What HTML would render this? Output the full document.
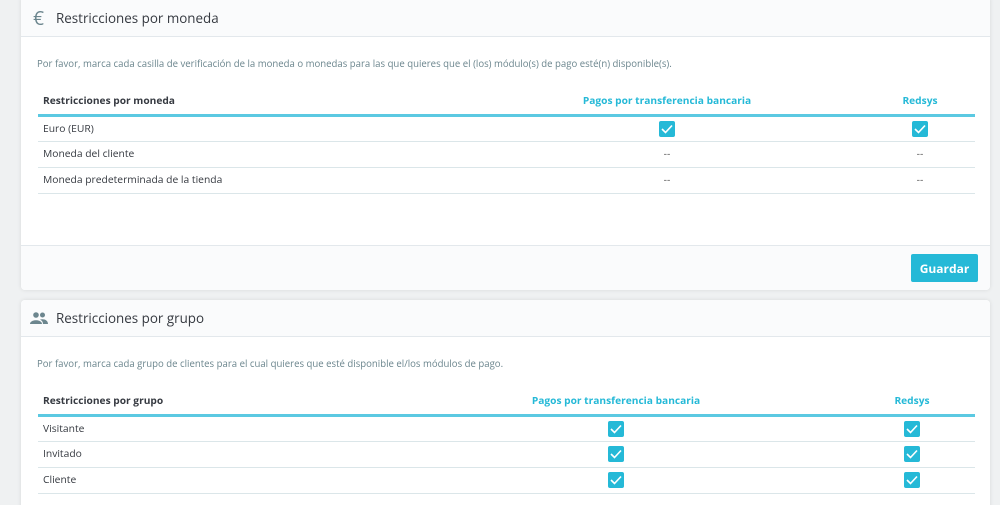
<!DOCTYPE html>
<html><head><meta charset="utf-8"><style>
*{box-sizing:border-box;margin:0;padding:0}
html{width:1000px;height:505px;overflow:hidden}
body{width:1000px;height:505px;overflow:hidden;background:#eff1f2;font-family:"Open Sans","Liberation Sans",sans-serif;color:#363a41;position:relative}
.card{position:absolute;left:21px;width:969px;background:#fff;border-radius:4px;box-shadow:0 0 4px rgba(0,0,0,.1);overflow:hidden}
.hd{height:37px;background:#fafbfc;border-bottom:1px solid #e3e8ec;display:flex;align-items:center;font-size:13.4px;color:#363a41}
.hd .ic{width:35px;display:flex;justify-content:center;color:#6c868e}
.desc{position:absolute;left:16px;font-size:9.6px;color:#6c868e}
table{position:absolute;left:17px;width:937px;border-collapse:collapse;font-size:10.3px;table-layout:fixed}
th{font-weight:bold;text-align:left;height:33px;padding:4px 5px 0;border-bottom:3px solid #5bc9e2;font-size:10.2px}
th.c{text-align:center;color:#25b9d7}
td{height:26px;border-bottom:1px solid #dbe6e9;padding:0 5px;color:#363a41}
td.c{text-align:center;color:#555}
.cb{display:inline-block;width:16px;height:16px;background:#25b9d7;border-radius:2px;vertical-align:middle;position:relative}
.cb svg{position:absolute;left:2px;top:3px}
.ft{position:absolute;left:0;right:0;bottom:0;height:45px;background:#fafbfc;border-top:1px solid #e3e8ec}
.btn{position:absolute;right:12px;top:8px;width:67px;height:28px;background:#25b9d7;color:#fff;font-weight:bold;font-size:12px;display:flex;align-items:center;justify-content:center;border-radius:2px}
</style></head><body>
<div class="card" style="top:-4px;height:294px">
<div class="hd" style="height:41px;padding-top:4px"><span class="ic" style="font-size:19px">€</span>Restricciones por moneda</div>
<div class="desc" style="top:61px">Por favor, marca cada casilla de verificación de la moneda o monedas para las que quieres que el (los) módulo(s) de pago esté(n) disponible(s).</div>
<table style="top:86px">
<tr><th style="width:431px">Restricciones por moneda</th><th class="c" style="width:396px">Pagos por transferencia bancaria</th><th class="c" style="width:110px">Redsys</th></tr>
<tr><td>Euro (EUR)</td><td class="c"><span class="cb"><svg width="12" height="10"><path d="M1 5 L4.5 8.5 L11 1.5" stroke="#fff" stroke-width="1.6" fill="none"/></svg></span></td><td class="c"><span class="cb"><svg width="12" height="10"><path d="M1 5 L4.5 8.5 L11 1.5" stroke="#fff" stroke-width="1.6" fill="none"/></svg></span></td></tr>
<tr><td>Moneda del cliente</td><td class="c">--</td><td class="c">--</td></tr>
<tr><td>Moneda predeterminada de la tienda</td><td class="c">--</td><td class="c">--</td></tr>
</table>
<div class="ft"><div class="btn">Guardar</div></div>
</div>
<div class="card" style="top:300px;height:220px">
<div class="hd"><span class="ic"><svg width="18" height="12" viewBox="0 0 18 12"><circle cx="6" cy="3" r="2.8" fill="#6c868e"/><circle cx="12.5" cy="3" r="2.5" fill="#6c868e"/><path d="M0 12 C0 7 12 7 12 12Z M10 7.5 C14 6.5 18 8 18 12 L13 12 C13 10 12 8.5 10 7.5Z" fill="#6c868e"/></svg></span>Restricciones por grupo</div>
<div class="desc" style="top:57px">Por favor, marca cada grupo de clientes para el cual quieres que esté disponible el/los módulos de pago.</div>
<table style="top:82px">
<tr><th style="width:345px">Restricciones por grupo</th><th class="c" style="width:466px">Pagos por transferencia bancaria</th><th class="c" style="width:126px">Redsys</th></tr>
<tr><td>Visitante</td><td class="c"><span class="cb"><svg width="12" height="10"><path d="M1 5 L4.5 8.5 L11 1.5" stroke="#fff" stroke-width="1.6" fill="none"/></svg></span></td><td class="c"><span class="cb"><svg width="12" height="10"><path d="M1 5 L4.5 8.5 L11 1.5" stroke="#fff" stroke-width="1.6" fill="none"/></svg></span></td></tr>
<tr><td>Invitado</td><td class="c"><span class="cb"><svg width="12" height="10"><path d="M1 5 L4.5 8.5 L11 1.5" stroke="#fff" stroke-width="1.6" fill="none"/></svg></span></td><td class="c"><span class="cb"><svg width="12" height="10"><path d="M1 5 L4.5 8.5 L11 1.5" stroke="#fff" stroke-width="1.6" fill="none"/></svg></span></td></tr>
<tr><td>Cliente</td><td class="c"><span class="cb"><svg width="12" height="10"><path d="M1 5 L4.5 8.5 L11 1.5" stroke="#fff" stroke-width="1.6" fill="none"/></svg></span></td><td class="c"><span class="cb"><svg width="12" height="10"><path d="M1 5 L4.5 8.5 L11 1.5" stroke="#fff" stroke-width="1.6" fill="none"/></svg></span></td></tr>
</table>
</div>
</body></html>
